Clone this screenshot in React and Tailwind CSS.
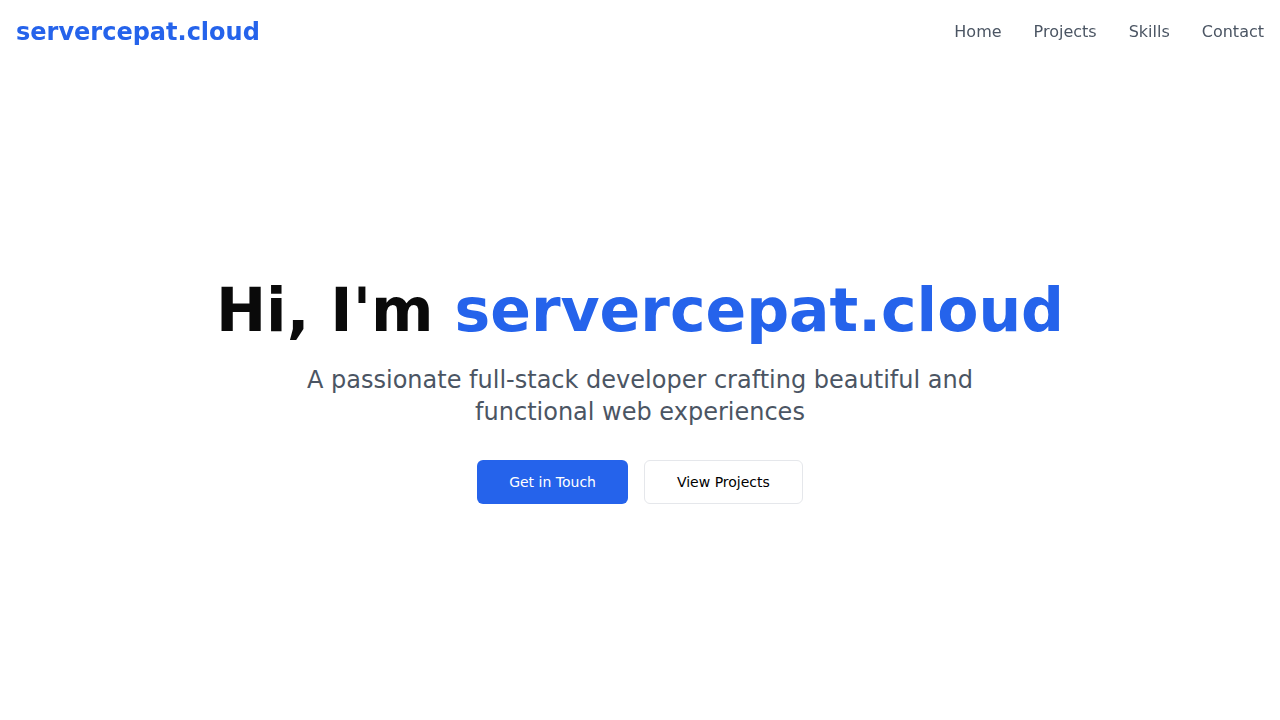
import React from 'react';

const navItems = ['Home', 'Projects', 'Skills', 'Contact'];

const Header = () => {
  return (
    <header className="fixed top-0 left-0 right-0 h-16 bg-white/90 z-10">
      <div className="h-full px-4 flex items-center justify-between">
        <a href="#" className="text-2xl font-bold text-[#2563eb]">servercepat.cloud</a>
        <nav className="flex items-center gap-8">
          {navItems.map((item) => (
            <a key={item} href="#" className="text-base text-[#4b5563] hover:text-[#2563eb]">
              {item}
            </a>
          ))}
        </nav>
      </div>
    </header>
  );
};

const Hero = () => {
  return (
    <section className="min-h-screen pt-16 flex items-center justify-center">
      <div className="text-center px-4">
        <h1 className="text-6xl font-bold text-[#0a0a0a] mb-6">
          Hi, I'm <span className="text-[#2563eb]">servercepat.cloud</span>
        </h1>
        <p className="text-2xl text-[#4b5563] max-w-2xl mx-auto mb-8">
          A passionate full-stack developer crafting beautiful and functional web experiences
        </p>
        <div className="flex justify-center gap-4">
          <a href="#" className="h-11 px-8 flex items-center rounded-md bg-[#2563eb] text-white text-sm">
            Get in Touch
          </a>
          <a href="#" className="h-11 px-8 flex items-center rounded-md border border-[#e5e7eb] bg-white text-black text-sm">
            View Projects
          </a>
        </div>
      </div>
    </section>
  );
};

export default function App() {
  return (
    <div className="min-h-screen bg-white font-['DejaVu_Sans',sans-serif]">
      <Header />
      <Hero />
    </div>
  );
}
